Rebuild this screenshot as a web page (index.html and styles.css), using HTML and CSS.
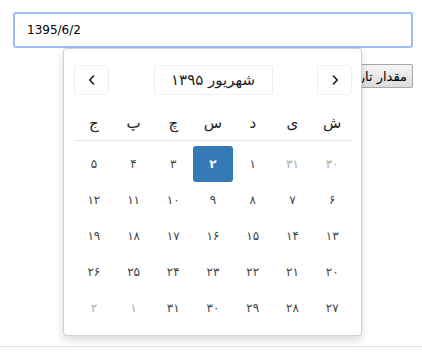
FILE: index.html
```html
<!DOCTYPE html>
<html lang="fa">

<head>
    <meta charset="UTF-8">
    <meta name="viewport" content="width=device-width, initial-scale=1.0">
    <title>انتخاب تاریخ</title>
    <link rel="stylesheet" href="styles.css">
</head>

<body>
    <div class="page">
        <div class="field">
            <input type="text" class="date-input" value="1395/6/2">

            <div class="datepicker">
                <div class="dp-header">
                    <button class="dp-nav" aria-label="قبلی">
                        <svg width="8" height="12" viewBox="0 0 8 12"><path d="M6 1.5 L1.8 6 L6 10.5" fill="none" stroke="#222" stroke-width="1.6"/></svg>
                    </button>
                    <button class="dp-title">شهریور ۱۳۹۵</button>
                    <button class="dp-nav" aria-label="بعدی">
                        <svg width="8" height="12" viewBox="0 0 8 12"><path d="M2 1.5 L6.2 6 L2 10.5" fill="none" stroke="#222" stroke-width="1.6"/></svg>
                    </button>
                </div>

                <div class="dp-weekdays">
                    <span>ش</span><span>ی</span><span>د</span><span>س</span><span>چ</span><span>پ</span><span>ج</span>
                </div>

                <div class="dp-days">
                    <span class="muted">۳۰</span><span class="muted">۳۱</span><span>۱</span><span class="selected">۲</span><span>۳</span><span>۴</span><span>۵</span>
                    <span>۶</span><span>۷</span><span>۸</span><span>۹</span><span>۱۰</span><span>۱۱</span><span>۱۲</span>
                    <span>۱۳</span><span>۱۴</span><span>۱۵</span><span>۱۶</span><span>۱۷</span><span>۱۸</span><span>۱۹</span>
                    <span>۲۰</span><span>۲۱</span><span>۲۲</span><span>۲۳</span><span>۲۴</span><span>۲۵</span><span>۲۶</span>
                    <span>۲۷</span><span>۲۸</span><span>۲۹</span><span>۳۰</span><span>۳۱</span><span class="muted">۱</span><span class="muted">۲</span>
                </div>
            </div>
        </div>

        <div class="actions">
            <button class="value-button">مقدار تاریخ</button>
        </div>
    </div>

    <div class="footer"></div>
</body>

</html>
```

FILE: styles.css
```css
:root {
    --text-color: #333;
    --muted-color: #aaa;
    --primary-color: #337ab7;
    --focus-border: #9dbcf5;
    --line-color: #e5e5e5;
}

body {
    font-family: 'DejaVu Sans', sans-serif;
    margin: 0;
    padding: 0;
    background: #fff;
    color: var(--text-color);
}

.page {
    padding: 12px 9px 0 13px;
    height: 334px;
    box-sizing: border-box;
}

.field {
    position: relative;
}

.date-input {
    display: block;
    width: 100%;
    height: 36px;
    box-sizing: border-box;
    border: 2px solid var(--focus-border);
    border-radius: 3px;
    padding: 0 12px;
    font-family: 'DejaVu Sans', sans-serif;
    font-size: 12px;
    color: #000;
    outline: none;
}

.actions {
    direction: rtl;
    display: flex;
    margin-top: 16px;
    padding-left: 1px;
}

.value-button {
    height: 24px;
    padding: 0 5px;
    font-family: 'DejaVu Sans', sans-serif;
    font-size: 13px;
    color: #000;
    background: linear-gradient(#f5f5f5, #dcdcdc);
    border: 1px solid #a9a9a9;
    border-radius: 2px;
}

/* تقویم */
.datepicker {
    position: absolute;
    top: 36px;
    left: 50px;
    width: 299px;
    box-sizing: border-box;
    padding: 16px 9px 9px 10px;
    background: #fff;
    border: 1px solid rgba(0, 0, 0, 0.18);
    border-radius: 4px;
    box-shadow: 0 4px 10px rgba(0, 0, 0, 0.15);
    z-index: 10;
}

.dp-header {
    display: flex;
    justify-content: space-between;
    align-items: center;
}

.dp-nav,
.dp-title {
    height: 30px;
    background: #fff;
    border: 1px solid #f0f0f0;
    border-radius: 4px;
    padding: 0;
    display: flex;
    align-items: center;
    justify-content: center;
}

.dp-nav {
    width: 35px;
}

.dp-title {
    width: 119px;
    direction: rtl;
    font-family: 'DejaVu Sans', sans-serif;
    font-size: 15px;
    color: #222;
}

.dp-weekdays,
.dp-days {
    direction: rtl;
    display: grid;
    grid-template-columns: repeat(7, 1fr);
    text-align: center;
}

.dp-weekdays {
    margin-top: 10px;
    height: 36px;
    box-sizing: border-box;
    border-bottom: 1px solid var(--line-color);
    align-items: center;
    font-size: 15px;
    color: #222;
}

.dp-days {
    margin-top: 5px;
    grid-auto-rows: 36px;
    font-size: 12px;
    color: #444;
}

.dp-days span {
    display: flex;
    align-items: center;
    justify-content: center;
    border-radius: 3px;
}

.dp-days .muted {
    color: var(--muted-color);
}

.dp-days .selected {
    background: var(--primary-color);
    color: #fff;
    font-weight: bold;
}

.footer {
    margin-top: 12px;
    border-top: 1px solid #e2e2e2;
    height: 5px;
}
```
